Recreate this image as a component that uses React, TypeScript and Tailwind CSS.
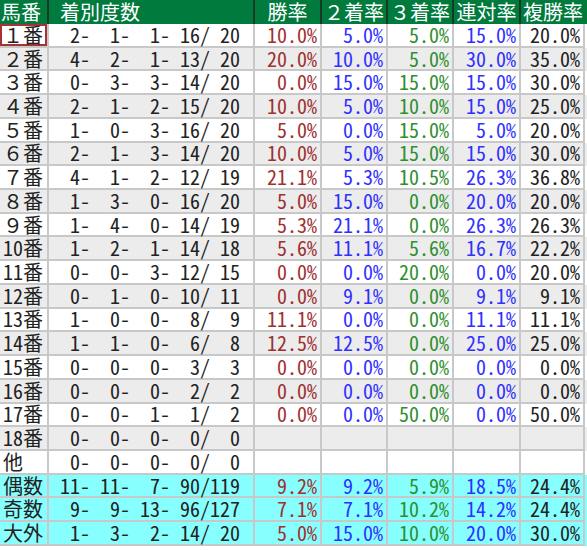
const rows: [string, number[], (number | null)[]][] = [
  ["１番", [2, 1, 1, 16, 20], [10.0, 5.0, 5.0, 15.0, 20.0]],
  ["２番", [4, 2, 1, 13, 20], [20.0, 10.0, 5.0, 30.0, 35.0]],
  ["３番", [0, 3, 3, 14, 20], [0.0, 15.0, 15.0, 15.0, 30.0]],
  ["４番", [2, 1, 2, 15, 20], [10.0, 5.0, 10.0, 15.0, 25.0]],
  ["５番", [1, 0, 3, 16, 20], [5.0, 0.0, 15.0, 5.0, 20.0]],
  ["６番", [2, 1, 3, 14, 20], [10.0, 5.0, 15.0, 15.0, 30.0]],
  ["７番", [4, 1, 2, 12, 19], [21.1, 5.3, 10.5, 26.3, 36.8]],
  ["８番", [1, 3, 0, 16, 20], [5.0, 15.0, 0.0, 20.0, 20.0]],
  ["９番", [1, 4, 0, 14, 19], [5.3, 21.1, 0.0, 26.3, 26.3]],
  ["10番", [1, 2, 1, 14, 18], [5.6, 11.1, 5.6, 16.7, 22.2]],
  ["11番", [0, 0, 3, 12, 15], [0.0, 0.0, 20.0, 0.0, 20.0]],
  ["12番", [0, 1, 0, 10, 11], [0.0, 9.1, 0.0, 9.1, 9.1]],
  ["13番", [1, 0, 0, 8, 9], [11.1, 0.0, 0.0, 11.1, 11.1]],
  ["14番", [1, 1, 0, 6, 8], [12.5, 12.5, 0.0, 25.0, 25.0]],
  ["15番", [0, 0, 0, 3, 3], [0.0, 0.0, 0.0, 0.0, 0.0]],
  ["16番", [0, 0, 0, 2, 2], [0.0, 0.0, 0.0, 0.0, 0.0]],
  ["17番", [0, 0, 1, 1, 2], [0.0, 0.0, 50.0, 0.0, 50.0]],
  ["18番", [0, 0, 0, 0, 0], [null, null, null, null, null]],
  ["他", [0, 0, 0, 0, 0], [null, null, null, null, null]],
  ["偶数", [11, 11, 7, 90, 119], [9.2, 9.2, 5.9, 18.5, 24.4]],
  ["奇数", [9, 9, 13, 96, 127], [7.1, 7.1, 10.2, 14.2, 24.4]],
  ["大外", [1, 3, 2, 14, 20], [5.0, 15.0, 10.0, 20.0, 30.0]],
];

const headers = ["勝率", "２着率", "３着率", "連対率", "複勝率"];
const pctColors = ["text-[#a03030]", "text-[#3030ff]", "text-[#2f8f2f]", "text-[#3030ff]", "text-[#222222]"];
const widths = ["w-[67px]", "w-[66px]", "w-[66px]", "w-[67px]", "w-[64px]"];

function record(n: number[]) {
  const p = (v: number) => String(v).padStart(3, " ");
  return `${p(n[0])}-${p(n[1])}-${p(n[2])}-${p(n[3])}/${p(n[4])}`;
}

export default function App() {
  return (
    <div
      className="w-[587px] h-[550px] bg-white text-[20px] leading-[20px] text-[#222222]"
      style={{ fontFamily: '"Noto Sans Mono CJK JP", "Noto Sans CJK JP", monospace' }}
    >
      <div className="flex h-[24px] bg-[#007a3d] text-white">
        <div className="w-[49px] flex items-center pl-[1px] border-r-2 border-[#163a22]">馬番</div>
        <div className="w-[206px] flex items-center pl-[11px] border-r-2 border-[#163a22]">着別度数</div>
        {headers.map((h, i) => (
          <div key={h} className={`${widths[i]} flex items-center justify-center ${i < 4 ? "border-r-2 border-[#163a22]" : ""}`}>
            {h}
          </div>
        ))}
      </div>
      {rows.map(([label, rec, pcts], r) => {
        const bg = r >= 19 ? "bg-[#88ffff]" : r % 2 === 0 ? "bg-white" : "bg-[#ececec]";
        return (
          <div key={label} className={`flex h-[23.73px] ${bg}`}>
            <div className={`w-[49px] flex items-center pl-[3px] border-r-2 border-b-2 border-[#c8c8c8] ${r === 0 ? "ring-2 ring-inset ring-[#a83232]" : ""}`}>
              {label}
            </div>
            <div className="w-[206px] flex items-center pl-[1px] whitespace-pre border-r-2 border-b-2 border-[#c8c8c8]">
              {record(rec)}
            </div>
            {pcts.map((v, i) => (
              <div
                key={i}
                className={`${widths[i]} flex items-center justify-end pr-[3px] border-r-2 border-b-2 border-[#c8c8c8] ${pctColors[i]}`}
              >
                {v === null ? "" : `${v.toFixed(1)}%`}
              </div>
            ))}
          </div>
        );
      })}
    </div>
  );
}
